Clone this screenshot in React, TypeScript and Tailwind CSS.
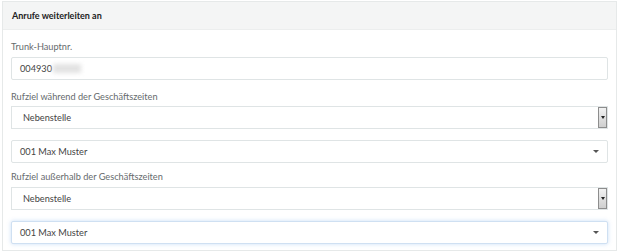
import React from 'react'

const font = { fontFamily: 'Lato, "Liberation Sans", sans-serif' }

function Label({ children }: { children: React.ReactNode }) {
  return <div className="h-4 text-[9.2px] leading-4 text-[#666b6d]">{children}</div>
}

function NativeSelect({ value }: { value: string }) {
  return (
    <div className="flex h-[23px] items-stretch border border-[#dfe4e5] bg-white">
      <div className="flex flex-1 items-center pl-[11px] text-[9.2px] text-[#444]">{value}</div>
      <div className="flex w-[9px] items-center justify-center border border-[#8d8d8d] bg-gradient-to-b from-[#f2f2f2] to-[#cfcfcf]">
        <div className="h-0 w-0 border-x-[2px] border-t-[3px] border-x-transparent border-t-[#222]" />
      </div>
    </div>
  )
}

function Select2({ value, focus }: { value: string; focus?: boolean }) {
  return (
    <div
      className={
        'flex h-[23px] items-center justify-between rounded-[2px] border bg-white pl-[8px] pr-[8px] text-[9.2px] text-[#444] ' +
        (focus ? 'border-[#cfe0f2] shadow-[0_0_4px_rgba(102,160,230,0.35)]' : 'border-[#dfe4e5]')
      }
    >
      <span>{value}</span>
      <div className="h-0 w-0 border-x-[3px] border-t-[3px] border-x-transparent border-t-[#555]" />
    </div>
  )
}

export default function App() {
  return (
    <div className="h-[251px] w-[620px] bg-white pl-[2px] pt-[1px]" style={font}>
      <div className="w-[615px] border border-[#e6e9e9] bg-white">
        <div className="flex h-[28px] items-center border-b border-[#eceeee] bg-[#f4f5f5] pl-[9px] text-[9px] font-bold text-[#222]">
          Anrufe weiterleiten an
        </div>
        <div className="px-[8px] pb-[6px] pt-[9px]">
          <Label>Trunk-Hauptnr.</Label>
          <div className="mt-[2px] flex h-[23px] items-center rounded-[2px] border border-[#dfe4e5] bg-white pl-[8px] text-[9.2px] text-[#444]">
            004930
            <span className="ml-[1px] inline-block h-[9px] w-[28px] bg-[#e2e2e2] blur-[2px]" />
          </div>

          <div className="mt-[9px]">
            <Label>Rufziel während der Geschäftszeiten</Label>
          </div>
          <div className="mt-[1px]">
            <NativeSelect value="Nebenstelle" />
          </div>
          <div className="mt-[11px]">
            <Select2 value="001 Max Muster" />
          </div>

          <div className="mt-[6px]">
            <Label>Rufziel außerhalb der Geschäftszeiten</Label>
          </div>
          <div className="mt-[2px]">
            <NativeSelect value="Nebenstelle" />
          </div>
          <div className="mt-[11px]">
            <Select2 value="001 Max Muster" focus />
          </div>
        </div>
      </div>
    </div>
  )
}
